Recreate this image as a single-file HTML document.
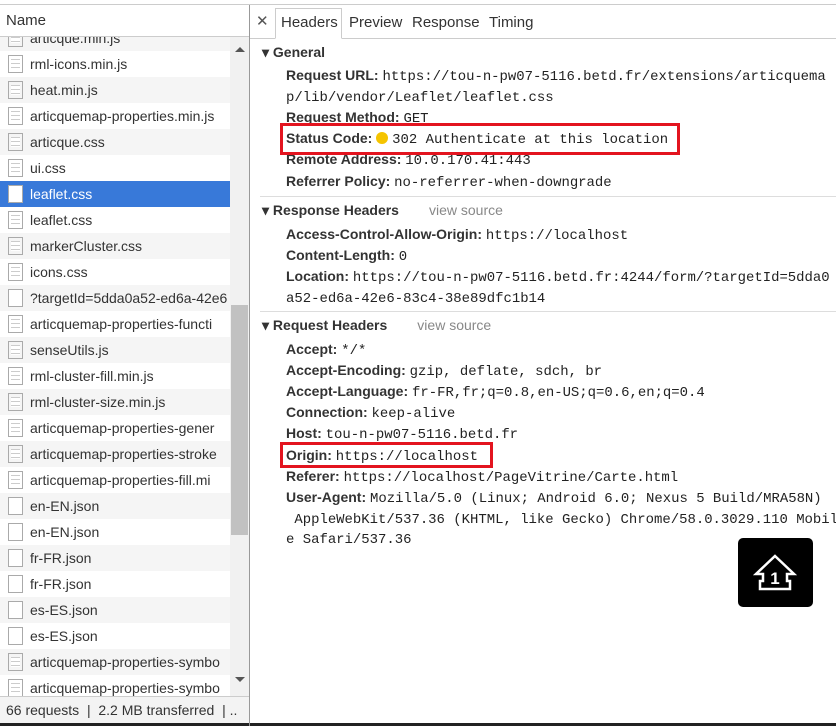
<!DOCTYPE html>
<html><head><meta charset="utf-8"><style>
*{margin:0;padding:0;box-sizing:border-box}
body{width:836px;height:726px;overflow:hidden;background:#fff;font-family:"Liberation Sans",sans-serif;position:relative;color:#333}
.abs{position:absolute;white-space:nowrap}
.row{position:absolute;left:0;width:230px;height:26px;font-size:14px;line-height:26px;color:#333;overflow:hidden;white-space:nowrap}
.row.g{background:#f5f5f5}
.row.sel{background:#3879d9;color:#fff}
.ic{position:absolute;left:8px;top:4px;width:15px;height:18px;border:1px solid #aaa;background:#fff}
.ic.l{background:repeating-linear-gradient(#fff 0 3px,#ccc 3px 4px);background-clip:content-box;padding:3px 2px}
.row span{position:absolute;left:30px}
.k{font-weight:bold;color:#333;font-size:14px}
.v{font-family:"Liberation Mono",monospace;font-size:13.95px;color:#222}
.ln{position:absolute;left:286px;white-space:nowrap;line-height:21px;font-size:14px}
.sec{position:absolute;left:262px;font-size:14px;font-weight:bold;color:#333;white-space:nowrap}
.vs{font-weight:normal;color:#888;margin-left:30px}
.red{position:absolute;border:3px solid #e3141f}
</style></head><body>
<div class="abs" style="left:0;top:0;width:836px;height:5px;background:#fff;border-bottom:1px solid #ccc"></div>
<div class="abs" style="left:0;top:5px;width:250px;height:32px;border-bottom:1px solid #ccc;font-size:15px;line-height:32px;padding-left:6px">Name</div>
<div class="abs" style="left:0;top:37px;width:250px;height:659px;overflow:hidden">
<div class="row g" style="top:-12px"><div class="ic l"></div><span>articque.min.js</span></div>
<div class="row" style="top:14px"><div class="ic l"></div><span>rml-icons.min.js</span></div>
<div class="row g" style="top:40px"><div class="ic l"></div><span>heat.min.js</span></div>
<div class="row" style="top:66px"><div class="ic l"></div><span>articquemap-properties.min.js</span></div>
<div class="row g" style="top:92px"><div class="ic l"></div><span>articque.css</span></div>
<div class="row" style="top:118px"><div class="ic l"></div><span>ui.css</span></div>
<div class="row sel" style="top:144px"><div class="ic"></div><span>leaflet.css</span></div>
<div class="row" style="top:170px"><div class="ic l"></div><span>leaflet.css</span></div>
<div class="row g" style="top:196px"><div class="ic l"></div><span>markerCluster.css</span></div>
<div class="row" style="top:222px"><div class="ic l"></div><span>icons.css</span></div>
<div class="row g" style="top:248px"><div class="ic"></div><span>?targetId=5dda0a52-ed6a-42e6</span></div>
<div class="row" style="top:274px"><div class="ic l"></div><span>articquemap-properties-functi</span></div>
<div class="row g" style="top:300px"><div class="ic l"></div><span>senseUtils.js</span></div>
<div class="row" style="top:326px"><div class="ic l"></div><span>rml-cluster-fill.min.js</span></div>
<div class="row g" style="top:352px"><div class="ic l"></div><span>rml-cluster-size.min.js</span></div>
<div class="row" style="top:378px"><div class="ic l"></div><span>articquemap-properties-gener</span></div>
<div class="row g" style="top:404px"><div class="ic l"></div><span>articquemap-properties-stroke</span></div>
<div class="row" style="top:430px"><div class="ic l"></div><span>articquemap-properties-fill.mi</span></div>
<div class="row g" style="top:456px"><div class="ic"></div><span>en-EN.json</span></div>
<div class="row" style="top:482px"><div class="ic"></div><span>en-EN.json</span></div>
<div class="row g" style="top:508px"><div class="ic"></div><span>fr-FR.json</span></div>
<div class="row" style="top:534px"><div class="ic"></div><span>fr-FR.json</span></div>
<div class="row g" style="top:560px"><div class="ic"></div><span>es-ES.json</span></div>
<div class="row" style="top:586px"><div class="ic"></div><span>es-ES.json</span></div>
<div class="row g" style="top:612px"><div class="ic l"></div><span>articquemap-properties-symbo</span></div>
<div class="row" style="top:638px"><div class="ic l"></div><span>articquemap-properties-symbo</span></div>
<div class="abs" style="left:230px;top:0;width:19px;height:659px;background:#f1f1f1"></div>
<div class="abs" style="left:231px;top:268px;width:17px;height:230px;background:#c1c1c1"></div>
<div class="abs" style="left:235px;top:10px;border:5px solid transparent;border-bottom:5px solid #555;border-top:0"></div>
<div class="abs" style="left:235px;top:640px;border:5px solid transparent;border-top:5px solid #555;border-bottom:0"></div>
</div>
<div class="abs" style="left:0;top:696px;width:250px;height:30px;background:#f3f3f3;border-top:1px solid #ccc;font-size:14px;line-height:26px;padding-left:6px">66 requests &nbsp;| &nbsp;2.2 MB transferred &nbsp;| ..</div>
<div class="abs" style="left:0;top:723px;width:836px;height:3px;background:#222"></div>
<div class="abs" style="left:249px;top:5px;width:1px;height:721px;background:#999"></div>
<!-- right -->
<div class="abs" style="left:250px;top:5px;width:586px;height:34px;border-bottom:1px solid #ccc;background:#fff"></div>
<div class="abs" style="left:256px;top:12px;font-size:15px;color:#555">✕</div>
<div class="abs" style="left:275px;top:8px;width:67px;height:31px;border:1px solid #ccc;border-bottom:1px solid #fff;background:#fff"></div>
<div class="abs" style="left:281px;top:14px;font-size:15px;color:#333">Headers</div>
<div class="abs" style="left:349px;top:14px;font-size:15px;color:#333">Preview</div>
<div class="abs" style="left:412px;top:14px;font-size:15px;color:#333">Response</div>
<div class="abs" style="left:489px;top:14px;font-size:15px;color:#333">Timing</div>

<div class="sec" style="top:44px">▾ General</div>
<div class="ln" style="top:65px"><span class="k">Request URL:</span> <span class="v">https://tou-n-pw07-5116.betd.fr/extensions/articquema</span></div>
<div class="ln" style="top:86px"><span class="v">p/lib/vendor/Leaflet/leaflet.css</span></div>
<div class="ln" style="top:107px"><span class="k">Request Method:</span> <span class="v">GET</span></div>
<div class="ln" style="top:128px"><span class="k">Status Code:</span> <span style="display:inline-block;width:12px;height:12px;border-radius:50%;background:#f5c400;vertical-align:-1px"></span> <span class="v">302 Authenticate at this location</span></div>
<div class="ln" style="top:149px"><span class="k">Remote Address:</span> <span class="v">10.0.170.41:443</span></div>
<div class="ln" style="top:171px"><span class="k">Referrer Policy:</span> <span class="v">no-referrer-when-downgrade</span></div>
<div class="red" style="left:280px;top:123px;width:400px;height:32px"></div>
<div class="abs" style="left:260px;top:196px;width:576px;height:1px;background:#ddd"></div>

<div class="sec" style="top:202px">▾ Response Headers<span class="vs">view source</span></div>
<div class="ln" style="top:224px"><span class="k">Access-Control-Allow-Origin:</span> <span class="v">https://localhost</span></div>
<div class="ln" style="top:245px"><span class="k">Content-Length:</span> <span class="v">0</span></div>
<div class="ln" style="top:266px"><span class="k">Location:</span> <span class="v">https://tou-n-pw07-5116.betd.fr:4244/form/?targetId=5dda0</span></div>
<div class="ln" style="top:287px"><span class="v">a52-ed6a-42e6-83c4-38e89dfc1b14</span></div>
<div class="abs" style="left:260px;top:311px;width:576px;height:1px;background:#ddd"></div>

<div class="sec" style="top:317px">▾ Request Headers<span class="vs">view source</span></div>
<div class="ln" style="top:339px"><span class="k">Accept:</span> <span class="v">*/*</span></div>
<div class="ln" style="top:360px"><span class="k">Accept-Encoding:</span> <span class="v">gzip, deflate, sdch, br</span></div>
<div class="ln" style="top:381px"><span class="k">Accept-Language:</span> <span class="v">fr-FR,fr;q=0.8,en-US;q=0.6,en;q=0.4</span></div>
<div class="ln" style="top:402px"><span class="k">Connection:</span> <span class="v">keep-alive</span></div>
<div class="ln" style="top:423px"><span class="k">Host:</span> <span class="v">tou-n-pw07-5116.betd.fr</span></div>
<div class="ln" style="top:445px"><span class="k">Origin:</span> <span class="v">https://localhost</span></div>
<div class="red" style="left:280px;top:442px;width:213px;height:26px"></div>
<div class="ln" style="top:466px"><span class="k">Referer:</span> <span class="v">https://localhost/PageVitrine/Carte.html</span></div>
<div class="ln" style="top:487px"><span class="k">User-Agent:</span> <span class="v">Mozilla/5.0 (Linux; Android 6.0; Nexus 5 Build/MRA58N)</span></div>
<div class="ln" style="top:508px"><span class="v">&nbsp;AppleWebKit/537.36 (KHTML, like Gecko) Chrome/58.0.3029.110 Mobil</span></div>
<div class="ln" style="top:528px"><span class="v">e Safari/537.36</span></div>

<div class="abs" style="left:738px;top:538px;width:75px;height:69px;background:#000;border-radius:5px"></div>
<svg class="abs" style="left:752px;top:553px" width="46" height="40" viewBox="0 0 46 40">
<path d="M23 3 L42 21 L35 21 L35 28 L38 28 L38 36 L8 36 L8 28 L11 28 L11 21 L4 21 Z" fill="none" stroke="#fff" stroke-width="2.5" stroke-linejoin="miter"/>
<text x="23" y="31" text-anchor="middle" fill="#fff" font-family="Liberation Sans" font-weight="bold" font-size="17">1</text>
</svg>
</body></html>
